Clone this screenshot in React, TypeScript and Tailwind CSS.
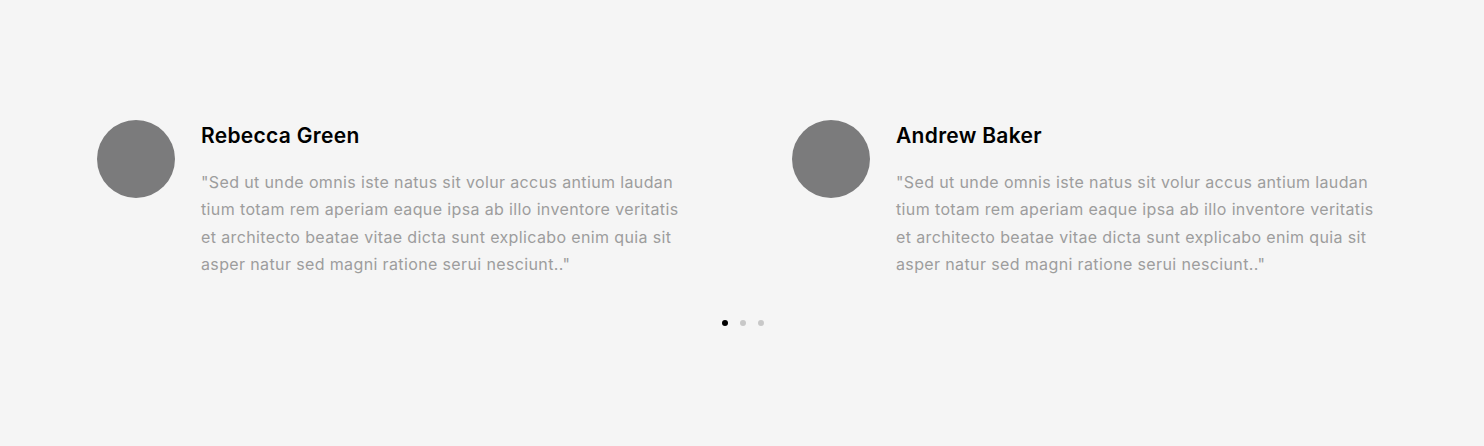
const testimonials = [
  {
    name: "Rebecca Green",
    quote:
      "\"Sed ut unde omnis iste natus sit volur accus antium laudan tium totam rem aperiam eaque ipsa ab illo inventore veritatis et architecto beatae vitae dicta sunt explicabo enim quia sit asper natur sed magni ratione serui nesciunt..\"",
  },
  {
    name: "Andrew Baker",
    quote:
      "\"Sed ut unde omnis iste natus sit volur accus antium laudan tium totam rem aperiam eaque ipsa ab illo inventore veritatis et architecto beatae vitae dicta sunt explicabo enim quia sit asper natur sed magni ratione serui nesciunt..\"",
  },
];

export default function App() {
  return (
    <div className="min-h-[446px] w-full bg-[#f5f5f5] font-['Inter','Noto_Sans',sans-serif]">
      <section className="pt-[120px] pb-[118px]">
        <div className="w-[1290px] mx-auto">
          <div className="grid grid-cols-[695px_595px]">
            {testimonials.map((t) => (
              <div key={t.name} className="flex gap-[26px]">
                <div className="w-[78px] h-[78px] rounded-full bg-[#7b7b7c] shrink-0" />
                <div className="w-[488px]">
                  <h3 className="text-[21px] leading-[30px] mt-[1px] font-semibold text-black tracking-[0.3px]">
                    {t.name}
                  </h3>
                  <p className="mt-[18px] text-[16px] leading-[27.3px] text-[#9d9d9d] tracking-[0.37px]">
                    {t.quote}
                  </p>
                </div>
              </div>
            ))}
          </div>
          {/* dots */}
          <div className="flex justify-center gap-[12px] mt-[42px] ml-[2px]">
            <span className="w-[6px] h-[6px] rounded-full bg-black" />
            <span className="w-[6px] h-[6px] rounded-full bg-[#c8c8c8]" />
            <span className="w-[6px] h-[6px] rounded-full bg-[#c8c8c8]" />
          </div>
        </div>
      </section>
    </div>
  );
}
